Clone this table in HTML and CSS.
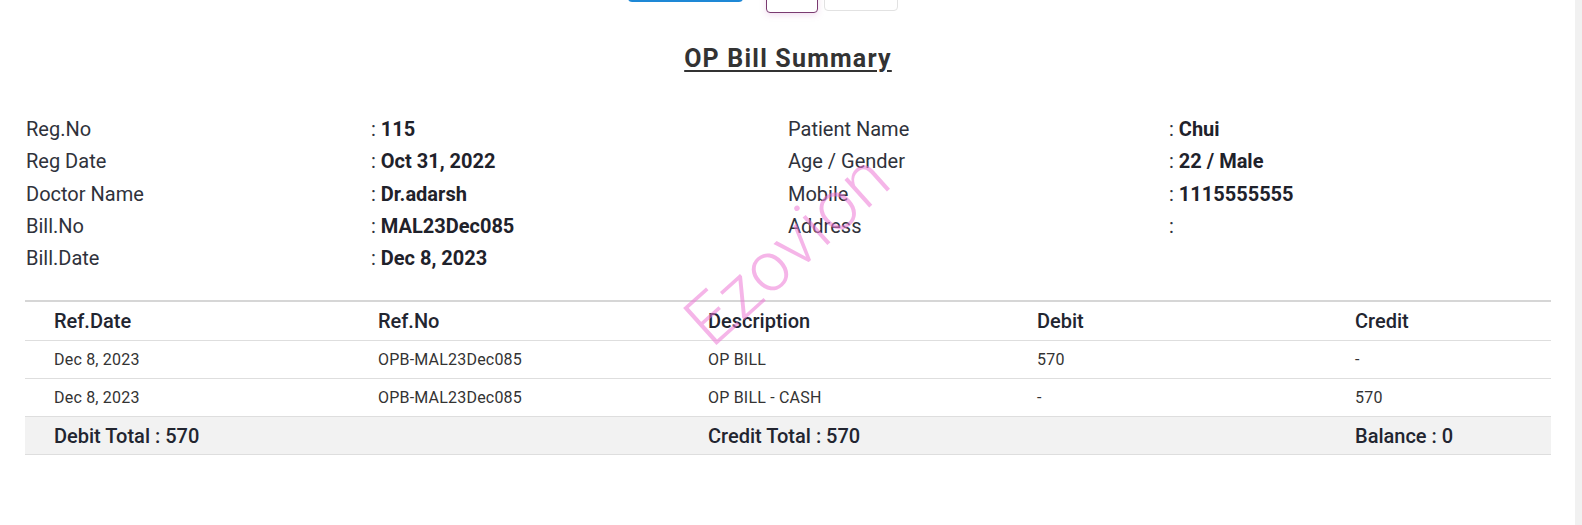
FILE: index.html
```html
<!DOCTYPE html>
<html>
<head>
<meta charset="utf-8">
<link rel="stylesheet" href="styles.css">
</head>
<body>
<div class="page">
  <main class="main">
    <div class="toolbar">
      <span class="btn btn-blue"></span>
      <span class="btn btn-purple"></span>
      <span class="btn btn-white"></span>
    </div>
    <h1 class="title">OP Bill Summary</h1>
    <div class="info">
      <div class="lbl">Reg.No</div><div class="val">: <b>115</b></div>
      <div class="lbl">Patient Name</div><div class="val">: <b>Chui</b></div>
      <div class="lbl">Reg Date</div><div class="val">: <b>Oct 31, 2022</b></div>
      <div class="lbl">Age / Gender</div><div class="val">: <b>22 / Male</b></div>
      <div class="lbl">Doctor Name</div><div class="val">: <b>Dr.adarsh</b></div>
      <div class="lbl">Mobile</div><div class="val">: <b>1115555555</b></div>
      <div class="lbl">Bill.No</div><div class="val">: <b>MAL23Dec085</b></div>
      <div class="lbl">Address</div><div class="val">:</div>
      <div class="lbl">Bill.Date</div><div class="val">: <b>Dec 8, 2023</b></div>
    </div>
    <table class="ledger">
      <colgroup>
        <col class="c1"><col class="c2"><col class="c3"><col class="c4"><col class="c5">
      </colgroup>
      <thead>
        <tr><th>Ref.Date</th><th>Ref.No</th><th>Description</th><th>Debit</th><th>Credit</th></tr>
      </thead>
      <tbody>
        <tr><td>Dec 8, 2023</td><td>OPB-MAL23Dec085</td><td>OP BILL</td><td>570</td><td>-</td></tr>
        <tr><td>Dec 8, 2023</td><td>OPB-MAL23Dec085</td><td>OP BILL - CASH</td><td>-</td><td>570</td></tr>
      </tbody>
      <tfoot>
        <tr><td colspan="2">Debit Total : 570</td><td colspan="2">Credit Total : 570</td><td>Balance : 0</td></tr>
      </tfoot>
    </table>
    <div class="watermark">Ezovion</div>
  </main>
  <div class="scrolltrack"></div>
</div>
</body>
</html>
```
FILE: styles.css
```css
html, body {
  margin: 0;
  padding: 0;
  background: #fff;
}
body {
  font-family: Roboto, "Liberation Sans", sans-serif;
  color: #2b2e38;
  overflow: hidden;
}
.page {
  display: flex;
  height: 525px;
}
.main {
  position: relative;
  width: 1575px;
  flex: none;
  padding: 0 24px 0 25px;
  box-sizing: border-box;
}
.scrolltrack {
  flex: 1;
  background: #f1f1f1;
}
.toolbar {
  display: flex;
  align-items: flex-start;
  margin-top: -26px;
  padding-left: 603px;
  height: 38px;
}
.btn {
  display: block;
  box-sizing: border-box;
  border-radius: 4px;
}
.btn-blue {
  width: 115px;
  height: 28px;
  background: #1e88d6;
}
.btn-purple {
  width: 52px;
  height: 39px;
  margin-left: 23px;
  border: 1px solid #7a3a70;
  background: #fff;
  box-shadow: 0 2px 6px rgba(200, 120, 190, 0.25);
}
.btn-white {
  width: 74px;
  height: 37px;
  margin-left: 6px;
  border: 1px solid #e2e2e2;
  background: #fff;
}
.title {
  margin: 32px 0 0;
  text-align: center;
  font-size: 25px;
  font-weight: 700;
  letter-spacing: 1.2px;
  color: #333;
  text-decoration: underline;
  text-decoration-thickness: 2px;
  text-underline-offset: 3px;
  line-height: 30px;
}
.info {
  display: grid;
  grid-template-columns: 345px 417px 381px 1fr;
  grid-auto-rows: 32.3px;
  align-items: center;
  margin-top: 39px;
  padding-left: 1px;
  font-size: 20px;
}
.lbl {
  color: #2f323b;
}
.val {
  color: #2f323b;
}
.val b {
  font-weight: 700;
  color: #1f222b;
}
.ledger {
  width: 1526px;
  margin-top: 26px;
  border-collapse: collapse;
  table-layout: fixed;
  border-top: 2px solid #d6d6d6;
}
.c1 { width: 324px; }
.c2 { width: 330px; }
.c3 { width: 329px; }
.c4 { width: 318px; }
.c5 { width: 225px; }
.ledger th, .ledger td {
  text-align: left;
  padding: 0 0 0 29px;
  border-bottom: 1px solid #dedede;
}
.ledger th {
  height: 38px;
  font-size: 20px;
  font-weight: 500;
  color: #222530;
}
.ledger tbody td {
  height: 37px;
  font-size: 16px;
  letter-spacing: 0.2px;
  color: #333;
}
.ledger tfoot td {
  height: 37px;
  font-size: 20px;
  font-weight: 500;
  color: #222530;
  background: #f2f2f2;
}
.watermark {
  position: absolute;
  left: 664px;
  top: 208px;
  font-size: 70px;
  font-weight: 300;
  color: rgba(236, 120, 214, 0.55);
  transform: rotate(-42deg);
  letter-spacing: 1px;
  pointer-events: none;
}
```
